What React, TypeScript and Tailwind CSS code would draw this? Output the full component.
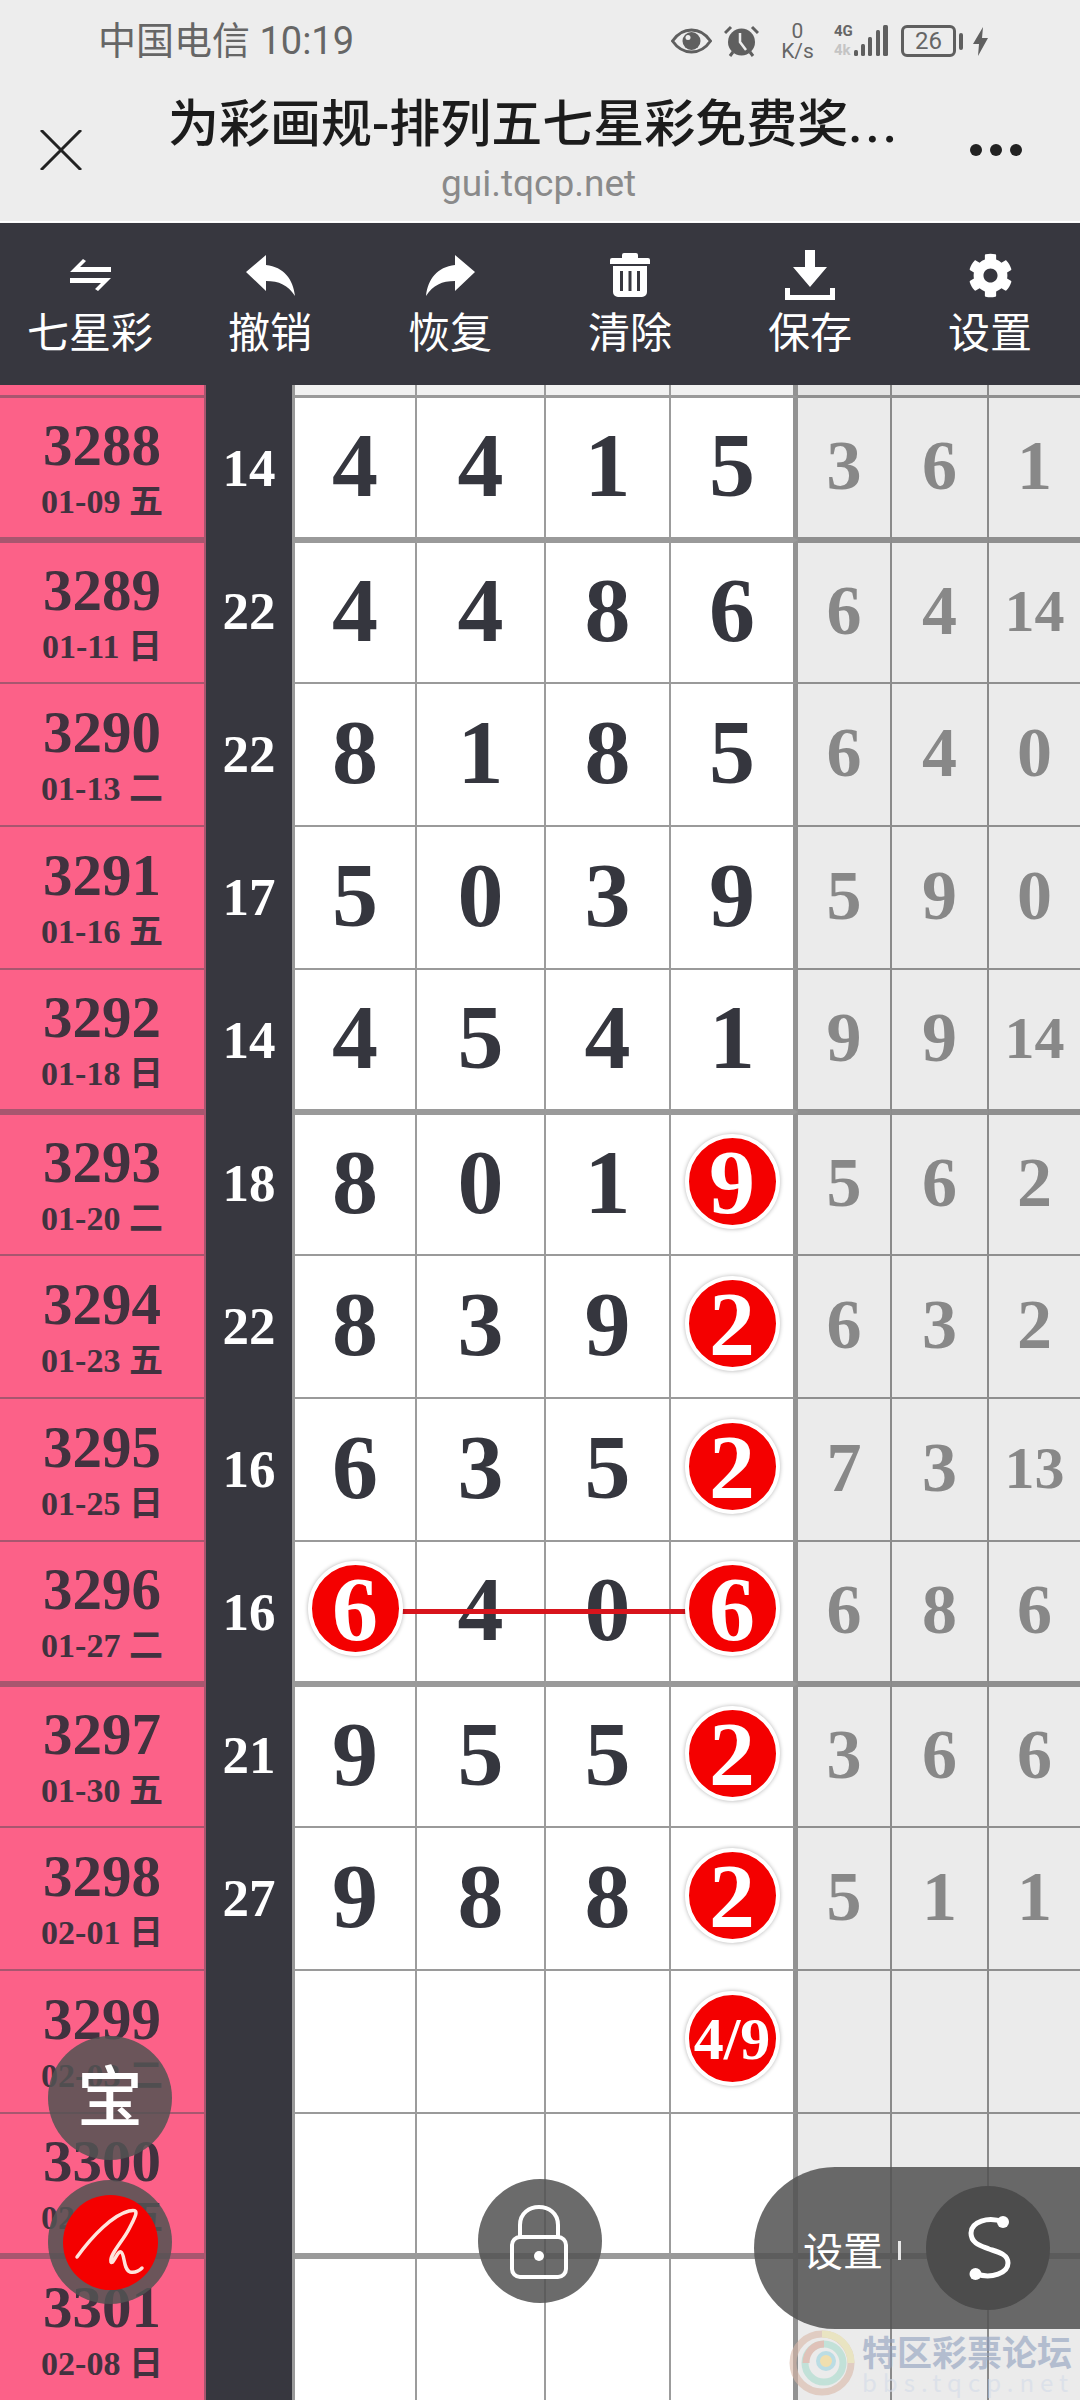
import { FaCog } from 'react-icons/fa'

type Row = { no: string; date: string; sum?: string; main: string[]; hits?: number[]; side: string[] }

const ROWS: Row[] = [
  { no: '3288', date: '01-09 五', sum: '14', main: ['4', '4', '1', '5'], side: ['3', '6', '1'] },
  { no: '3289', date: '01-11 日', sum: '22', main: ['4', '4', '8', '6'], side: ['6', '4', '14'] },
  { no: '3290', date: '01-13 二', sum: '22', main: ['8', '1', '8', '5'], side: ['6', '4', '0'] },
  { no: '3291', date: '01-16 五', sum: '17', main: ['5', '0', '3', '9'], side: ['5', '9', '0'] },
  { no: '3292', date: '01-18 日', sum: '14', main: ['4', '5', '4', '1'], side: ['9', '9', '14'] },
  { no: '3293', date: '01-20 二', sum: '18', main: ['8', '0', '1', '9'], hits: [3], side: ['5', '6', '2'] },
  { no: '3294', date: '01-23 五', sum: '22', main: ['8', '3', '9', '2'], hits: [3], side: ['6', '3', '2'] },
  { no: '3295', date: '01-25 日', sum: '16', main: ['6', '3', '5', '2'], hits: [3], side: ['7', '3', '13'] },
  { no: '3296', date: '01-27 二', sum: '16', main: ['6', '4', '0', '6'], hits: [0, 3], side: ['6', '8', '6'] },
  { no: '3297', date: '01-30 五', sum: '21', main: ['9', '5', '5', '2'], hits: [3], side: ['3', '6', '6'] },
  { no: '3298', date: '02-01 日', sum: '27', main: ['9', '8', '8', '2'], hits: [3], side: ['5', '1', '1'] },
  { no: '3299', date: '02-03 二', main: ['', '', '', '4/9'], hits: [3], side: ['', '', ''] },
  { no: '3300', date: '02-06 五', main: ['', '', '', ''], side: ['', '', ''] },
  { no: '3301', date: '02-08 日', main: ['', '', '', ''], side: ['', '', ''] },
]

const GRID = 'grid grid-cols-[206px_89px_122px_129px_125px_127px_94px_97px_91px]'

function StatusBar() {
  return (
    <div className="flex h-[82px] items-center justify-between pl-[98px] pr-[92px] text-[#666]">
      <span className="text-[38px] leading-none">中国电信 10:19</span>
      <div className="flex items-center">
        <svg width="41" height="26" viewBox="0 0 41 26" fill="none">
          <path d="M1.5 13C7 5 13 2 20.5 2S34 5 39.5 13C34 21 28 24 20.5 24S7 21 1.5 13Z" stroke="#5f5f5f" strokeWidth="3" />
          <circle cx="20.5" cy="13" r="9" fill="#5f5f5f" />
          <circle cx="17" cy="9.5" r="2.5" fill="#ededed" />
        </svg>
        <svg className="ml-[12px]" width="35" height="32" viewBox="0 0 35 32" fill="none">
          <circle cx="17.5" cy="17" r="13.5" fill="#5f5f5f" />
          <path d="M16 8V17L22 25" stroke="#ededed" strokeWidth="2.5" />
          <path d="M1 8 7 2M34 8 28 2M6 31l3-4M29 31l-3-4" stroke="#5f5f5f" strokeWidth="3" />
        </svg>
        <div className="ml-[20px] flex w-[37px] flex-col items-center text-[21px] leading-[20px]">
          <span>0</span>
          <span>K/s</span>
        </div>
        <div className="ml-[18px] flex w-[20px] flex-col text-[15px] font-bold leading-[19px]">
          <span>4G</span>
          <span className="text-[#c4c4c4]">4k</span>
        </div>
        <svg width="34" height="32" viewBox="0 0 34 32" fill="#5f5f5f">
          <rect x="0" y="25" width="4" height="6" rx="1.5" />
          <rect x="7" y="19" width="4" height="12" rx="1.5" />
          <rect x="14" y="12" width="4" height="19" rx="1.5" />
          <rect x="22" y="5" width="4" height="26" rx="1.5" />
          <rect x="29" y="0" width="5" height="31" rx="1.5" />
        </svg>
        <div className="ml-[13px] flex h-[32px] w-[55px] items-center justify-center rounded-[6px] border-[3px] border-[#5f5f5f] text-[24px] leading-none">
          26
        </div>
        <div className="ml-[3px] h-[17px] w-[4px] rounded-sm bg-[#5f5f5f]" />
        <svg className="ml-[10px]" width="15" height="29" viewBox="0 0 15 29" fill="#5f5f5f">
          <path d="M10 0 0 17H6L5 29 15 11H9Z" />
        </svg>
      </div>
    </div>
  )
}

function TitleBar() {
  return (
    <div className="flex h-[139px] items-start">
      <svg className="ml-[40px] mt-[48px] shrink-0" width="42" height="40" viewBox="0 0 42 40" stroke="#222" strokeWidth="3">
        <path d="M1 0 41 40M41 0 1 40" />
      </svg>
      <div className="ml-[86px] flex w-[739px] shrink-0 flex-col items-start">
        <span className="mt-[14px] whitespace-nowrap text-[51px] font-medium leading-[58px] text-[#1c1c1c]">
          为彩画规-排列五七星彩免费奖<span className="tracking-[3px]">...</span>
        </span>
        <span className="ml-[273px] mt-[9px] text-[37px] leading-[42px] text-[#8a8a8a]">gui.tqcp.net</span>
      </div>
      <div className="ml-[63px] mt-[62px] flex shrink-0 gap-[8px]">
        <span className="h-[12px] w-[12px] rounded-full bg-[#222]" />
        <span className="h-[12px] w-[12px] rounded-full bg-[#222]" />
        <span className="h-[12px] w-[12px] rounded-full bg-[#222]" />
      </div>
    </div>
  )
}

function SwapIcon() {
  return (
    <svg width="41" height="34" viewBox="0 0 41 34" fill="#fff">
      <path d="M0 14 13 1l3 2-6 6h31v5ZM0 20h41L28 33l-3-2 6-6H0Z" />
    </svg>
  )
}

function UndoIcon({ flip }: { flip?: boolean }) {
  return (
    <svg className={flip ? '-scale-x-100' : ''} width="49" height="41" viewBox="0 0 49 41" fill="#fff">
      <path d="M0 17 20 0V10C38 12 47 24 49 41 42 30 33 26 20 26V36Z" />
    </svg>
  )
}

function TrashIcon() {
  return (
    <svg width="40" height="44" viewBox="0 0 40 44" fill="#fff">
      <path d="M14 0h12a2 2 0 0 1 2 2v3h10a2 2 0 0 1 2 2v4H0V7a2 2 0 0 1 2-2h10V2a2 2 0 0 1 2-2Z" />
      <path fillRule="evenodd" d="M3 13h34v26a5 5 0 0 1-5 5H8a5 5 0 0 1-5-5ZM10 18v20h3V18ZM18.5 18v20h3V18ZM27 18v20h3V18Z" />
    </svg>
  )
}

function SaveIcon() {
  return (
    <svg width="50" height="50" viewBox="0 0 50 50" fill="#fff">
      <path d="M20 0h10v17h12L25 37 8 17h12Z" />
      <path d="M0 38h5v7h40v-7h5v12H0Z" />
    </svg>
  )
}

const TOOLS = [
  { label: '七星彩', icon: <SwapIcon /> },
  { label: '撤销', icon: <UndoIcon /> },
  { label: '恢复', icon: <UndoIcon flip /> },
  { label: '清除', icon: <TrashIcon /> },
  { label: '保存', icon: <SaveIcon /> },
  { label: '设置', icon: <FaCog size={45} color="#fff" /> },
]

function Toolbar() {
  return (
    <div className="mt-px grid h-[163px] grid-cols-6 border-t border-t-[#fafafa] bg-[#37373f]">
      {TOOLS.map(t => (
        <div key={t.label} className="flex flex-col items-center">
          <div className="mt-[27px] flex h-[50px] items-center justify-center">{t.icon}</div>
          <span className="mt-[9px] text-[42px] leading-[50px] text-white">{t.label}</span>
        </div>
      ))}
    </div>
  )
}

function Ball({ value }: { value: string }) {
  const small = value.length > 1
  return (
    <span className="relative z-10 flex h-[95px] w-[95px] items-center justify-center rounded-full border-4 border-white bg-[#f40000] text-white shadow-[0_0_4px_rgba(0,0,0,0.3)]">
      <span className={small ? 'text-[60px] leading-none' : 'text-[92px] leading-none'}>{value}</span>
    </span>
  )
}

function DrawRow({ row, i }: { row: Row; i: number }) {
  const top = i % 4 === 1 ? 'border-t-[3px]' : 'border-t'
  const bottom = i === 13 ? 'border-b-0' : i % 4 === 0 ? 'border-b-[3px]' : 'border-b'
  return (
    <div className={`relative ${GRID} ${i === 13 ? 'h-[144px]' : 'h-[143px]'}`}>
      <div className={`flex flex-col items-center justify-center border-r-2 border-r-[#a8566f] border-t-[#a8566f] border-b-[#a8566f] bg-[#fc6188] pt-[8px] text-[#41323f] ${top} ${bottom}`}>
        <span className="text-[59px] font-bold leading-[59px]">{row.no}</span>
        <span className="text-[34px] font-bold leading-[53px]">{row.date}</span>
      </div>
      <div className="flex items-center justify-center border-r-[3px] border-r-[#999] bg-[#37373f] text-[53px] font-bold leading-none text-white">
        {row.sum}
      </div>
      {row.main.map((v, c) => (
        <div
          key={c}
          className={`flex items-center justify-center border-t-[#9a9a9a] border-b-[#9a9a9a] bg-white pb-[6px] text-[92px] font-bold leading-none text-[#35363e] ${top} ${bottom} ${c === 3 ? 'border-r-[5px] border-r-[#929292]' : 'border-r-2 border-r-[#9c9c9c]'}`}
        >
          {row.hits?.includes(c) ? <Ball value={v} /> : v}
        </div>
      ))}
      {row.side.map((v, c) => (
        <div
          key={c}
          className={`flex items-center justify-center border-t-[#8f8f8f] border-b-[#8f8f8f] bg-[#ebebeb] pb-[3px] font-bold leading-none text-[#888] ${top} ${bottom} ${c < 2 ? 'border-r-2 border-r-[#8a8a8a]' : ''} ${v.length > 1 ? 'text-[60px]' : 'text-[70px]'}`}
        >
          {v}
        </div>
      ))}
      {row.no === '3296' && <div className="absolute left-[355px] top-[68px] h-[5px] w-[377px] bg-[#d8141c]" />}
    </div>
  )
}

function TopStrip() {
  return (
    <div className={`${GRID} h-[12px]`}>
      <div className="border-r-2 border-b-2 border-r-[#a8566f] border-b-[#a8566f] bg-[#fc6188]" />
      <div className="border-r-[3px] border-r-[#999] bg-[#37373f]" />
      <div className="border-r-2 border-b-2 border-r-[#9c9c9c] border-b-[#9a9a9a] bg-[#f1f1f1]" />
      <div className="border-r-2 border-b-2 border-r-[#9c9c9c] border-b-[#9a9a9a] bg-[#f1f1f1]" />
      <div className="border-r-2 border-b-2 border-r-[#9c9c9c] border-b-[#9a9a9a] bg-[#f1f1f1]" />
      <div className="border-r-[5px] border-b-2 border-r-[#929292] border-b-[#9a9a9a] bg-[#f1f1f1]" />
      <div className="border-r-2 border-b-2 border-r-[#8a8a8a] border-b-[#8f8f8f] bg-[#e4e4e4]" />
      <div className="border-r-2 border-b-2 border-r-[#8a8a8a] border-b-[#8f8f8f] bg-[#e4e4e4]" />
      <div className="border-b-2 border-b-[#8f8f8f] bg-[#e4e4e4]" />
    </div>
  )
}

function Floats() {
  const fab = 'absolute flex h-[124px] w-[124px] items-center justify-center rounded-full bg-[rgba(83,83,83,0.86)]'
  return (
    <>
      <div className={`${fab} left-[48px] top-[2036px] pb-[12px] font-['Noto_Sans_CJK_SC',sans-serif] text-[66px] font-medium leading-none text-white`}>宝</div>
      <div className={`${fab} left-[48px] top-[2180px]`}>
        <svg width="95" height="95" viewBox="0 0 95 95" fill="none">
          <circle cx="47.5" cy="47.5" r="47.5" fill="#f40000" />
          <path
            d="M14 62C30 40 50 20 66 16C78 13 72 22 66 34C60 46 46 60 48 67C50 70 55 55 58 57C62 59 60 74 67 77C72 78 76 76 79 73"
            stroke="#ffe4dc"
            strokeWidth="3.5"
            strokeLinecap="round"
          />
        </svg>
      </div>
      <div className={`${fab} left-[478px] top-[2179px]`}>
        <svg width="124" height="124" viewBox="0 0 124 124" fill="none" stroke="#fff" strokeWidth="4">
          <rect x="34" y="58" width="54" height="40" rx="8" />
          <path d="M42 58V46C42 22 80 22 80 46V58" />
          <circle cx="61" cy="77" r="5" fill="#fff" stroke="none" />
        </svg>
      </div>
      <div className="absolute left-[754px] top-[2167px] flex h-[162px] w-[326px] items-center rounded-l-[81px] bg-[rgba(83,83,83,0.86)]">
        <span className="ml-[49px] mt-[2px] font-['Noto_Sans_CJK_SC',sans-serif] text-[40px] leading-none text-white">设置</span>
        <span className="ml-[15px] mt-[4px] h-[19px] w-[3px] bg-[#e8e8e8]" />
        <div className="ml-[25px] flex h-[124px] w-[124px] items-center justify-center rounded-full bg-[#4c4c4c]">
          <svg width="124" height="124" viewBox="0 0 124 124" fill="none">
            <path d="M77 36C62 30 45 36 45 47C45 58 56 60 63 63C72 66 82 68 82 77C82 87 66 93 50 88" stroke="#fff" strokeWidth="5" />
            <circle cx="77" cy="36" r="6" fill="#fff" />
            <circle cx="49.5" cy="88" r="6" fill="#fff" />
          </svg>
        </div>
      </div>
    </>
  )
}

function Watermark() {
  return (
    <div className="absolute left-[788px] top-[2330px] flex items-center opacity-60">
      <svg width="68" height="66" viewBox="0 0 68 66" fill="none" strokeWidth="7">
        <circle cx="34" cy="33" r="29" stroke="#d9b8a8" />
        <path d="M34 4C52 4 63 18 63 33" stroke="#e8e0a8" />
        <circle cx="36" cy="33" r="19" stroke="#a8dccc" />
        <path d="M18 33C18 22 26 14 36 14" stroke="#d8a898" />
        <circle cx="38" cy="31" r="8" fill="#f4d888" stroke="#9cd4e0" strokeWidth="4" />
      </svg>
      <div className="ml-[6px] flex flex-col font-['Noto_Sans_CJK_SC',sans-serif]">
        <span className="whitespace-nowrap text-[35px] font-bold leading-[38px] text-[#8f9fbe]">特区彩票论坛</span>
        <span className="whitespace-nowrap text-[24px] leading-[24px] tracking-[6px] text-[#d3dbe9]">bbs.tqcp.net</span>
      </div>
    </div>
  )
}

export default function App() {
  return (
    <div className="relative h-[2400px] w-[1080px] overflow-hidden bg-white font-['Roboto','Noto_Sans_CJK_SC',sans-serif]">
      <div className="h-[221px] bg-[#ededed]">
        <StatusBar />
        <TitleBar />
      </div>
      <Toolbar />
      <div className="font-['Liberation_Serif','Noto_Sans_CJK_SC',serif]">
        <TopStrip />
        {ROWS.map((r, i) => (
          <DrawRow key={r.no} row={r} i={i} />
        ))}
      </div>
      <Watermark />
      <Floats />
    </div>
  )
}
